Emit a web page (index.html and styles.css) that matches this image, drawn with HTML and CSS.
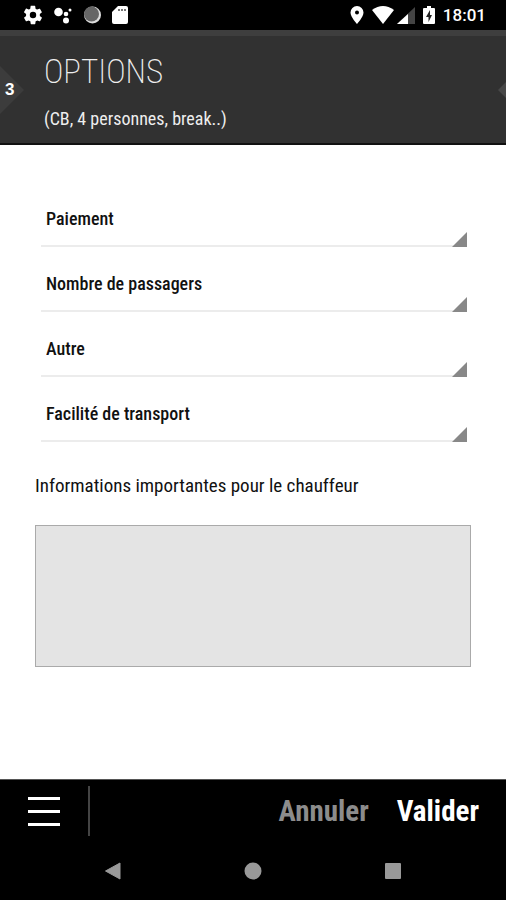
FILE: index.html
```html
<!DOCTYPE html>
<html lang="fr">
<head>
<meta charset="utf-8">
<meta name="viewport" content="width=device-width, initial-scale=1">
<title>Options</title>
<link rel="stylesheet" href="styles.css">
</head>
<body>
<div class="status">
  <div class="status-left">
    <svg width="22" height="22" viewBox="0 0 24 24" fill="#fff"><path d="M19.4 13c0-.3.1-.6.1-1s0-.7-.1-1l2.100-1.600c.2-.2.3-.4.100-.6l-2-3.500c-.1-.2-.4-.3-.6-.2l-2.500 1c-.5-.4-1.100-.7-1.700-1l-.4-2.600c0-.3-.2-.5-.5-.5h-4c-.2 0-.4.200-.5.400l-.4 2.700c-.6.200-1.100.600-1.700.900l-2.500-1c-.2 0-.5 0-.6.300l-2 3.400c-.1.300 0 .500.200.700l2.100 1.600c0 .3-.1.600-.1 1s0 .700.100 1l-2.100 1.600c-.2.200-.3.400-.1.600l2 3.500c.1.200.4.300.6.200l2.500-1c.5.400 1.100.700 1.700 1l.4 2.600c0 .3.200.500.500.500h4c.3 0 .500-.2.500-.5l.4-2.600c.6-.2 1.200-.6 1.700-1l2.500 1c.2.100.5 0 .6-.2l2-3.500c.1-.2.100-.5-.1-.6zM12 15.500a3.500 3.500 0 1 1 0-7 3.500 3.500 0 0 1 0 7z"/></svg>
    <svg width="20" height="20" viewBox="0 0 20 20" fill="#fff"><circle cx="4.500" cy="7" r="4.300"/><circle cx="12" cy="9" r="2.300"/><circle cx="16" cy="5" r="1.500"/><circle cx="12" cy="15.500" r="3"/></svg>
    <svg width="18" height="20" viewBox="0 0 18 20"><circle cx="8.500" cy="10" r="8.500" fill="#ddd"/><circle cx="7.500" cy="9" r="7.500" fill="#666"/></svg>
    <svg width="16" height="20" viewBox="0 0 16 20"><path d="M6 1h8q2 0 2 2v14q0 2-2 2H2q-2 0-2-2V7z" fill="#fff"/><path d="M6 4h2v2H6zM9 4h2v2H9zM12 4h2v2h-2z" fill="#777"/></svg>
  </div>
  <div class="status-right">
    <svg width="14" height="20" viewBox="0 0 14 20"><path fill="#fff" fill-rule="evenodd" d="M7 1a6.500 6.500 0 0 0-6.500 6.500C.5 12 7 19 7 19s6.500-7 6.500-11.500A6.500 6.500 0 0 0 7 1zm0 4.500a2 2 0 1 1 0 4 2 2 0 0 1 0-4z"/></svg>
    <svg class="wifi" width="22" height="20" viewBox="0 0 22 20"><path fill="#fff" d="M0 5q11-8 22 0L11 19z"/></svg>
    <svg width="18" height="20" viewBox="0 0 18 20"><path fill="#444" d="M18 2v17H0z"/><path fill="#fff" d="M11 9v10H0z"/></svg>
    <svg class="battery" width="12" height="20" viewBox="0 0 12 20"><path fill="#fff" d="M4 1h4v2h3q1 0 1 1v14q0 1-1 1H1q-1 0-1-1V4q0-1 1-1h3z"/><path d="M7 5l-4 7h2.500v5L9 10H7z" fill="#222"/></svg>
    <span class="clock">18:01</span>
  </div>
</div>
<header class="header">
  <svg class="prev" width="24" height="48" viewBox="0 0 24 48"><path d="M0 0l24 24L0 48z" fill="#3c3c3c"/></svg>
  <span class="step">3</span>
  <svg class="next" width="8" height="16" viewBox="0 0 8 16"><path d="M8 0L0 8l8 8z" fill="#484848"/></svg>
  <h1 class="title">OPTIONS</h1>
  <p class="subtitle">(CB, 4 personnes, break..)</p>
</header>
<main class="content">
  <div class="fields">
    <div class="field"><select aria-label="Paiement"><option>Paiement</option></select></div>
    <div class="field"><select aria-label="Nombre de passagers"><option>Nombre de passagers</option></select></div>
    <div class="field"><select aria-label="Autre"><option>Autre</option></select></div>
    <div class="field"><select aria-label="Facilité de transport"><option>Facilité de transport</option></select></div>
  </div>
  <label class="info-label" for="info">Informations importantes pour le chauffeur</label>
  <textarea class="info" id="info"></textarea>
</main>
<footer>
  <div class="actions">
    <button class="menu" type="button" aria-label="Menu"><svg width="32" height="29" viewBox="0 0 32 29" fill="#fff"><path d="M0 0h32v3H0zM0 13h32v3H0zM0 26h32v3H0z"/></svg></button>
    <button class="cancel" type="button">Annuler</button>
    <button class="submit" type="button">Valider</button>
  </div>
  <nav class="system">
    <button type="button" aria-label="Retour"><svg width="18" height="18" viewBox="0 0 18 18"><path d="M1.500 9L16 1v16z" fill="#999" stroke="#999" stroke-linejoin="round"/></svg></button>
    <button type="button" aria-label="Accueil"><svg width="18" height="18" viewBox="0 0 18 18"><circle cx="9" cy="9" r="8.500" fill="#999"/></svg></button>
    <button type="button" aria-label="Applications"><svg width="18" height="18" viewBox="0 0 18 18"><rect x="1" y="1" width="16" height="16" rx="1" fill="#999"/></svg></button>
  </nav>
</footer>
</body>
</html>
```
FILE: styles.css
```css
* { box-sizing: border-box; }
body {
  margin: 0;
  min-height: 100vh;
  display: flex;
  flex-direction: column;
  background: #fff;
  color: #111;
  font-family: "Liberation Sans Narrow", "Roboto Condensed", "Open Sans Condensed", "Liberation Sans", sans-serif;
  font-size: 18px;
}
svg { display: block; flex: none; }
button { padding: 0; border: 0; background: none; font: inherit; color: inherit; }
.status {
  height: 30px;
  padding: 0 20px 0 22px;
  display: flex;
  align-items: center;
  justify-content: space-between;
  background: #000;
  color: #fff;
}
.status-left, .status-right { display: flex; align-items: center; }
.status-left { gap: 10px; }
.wifi { margin: 0 3px 0 8px; }
.battery { margin: 0 8px; }
.clock { font: 500 17px/20px Roboto, sans-serif; }
.header {
  position: relative;
  height: 115px;
  padding: 16px 44px 0;
  background: #313131;
  border-top: 6px solid #3e3e3e;
  border-bottom: 2px solid #111;
  color: #eee;
}
.prev { position: absolute; left: 0; top: 30px; }
.next { position: absolute; right: 0; top: 46px; }
.step {
  position: absolute;
  left: 5px;
  top: 44px;
  font: 700 17px/20px "Liberation Sans", sans-serif;
  color: #fff;
}
.title { margin: 0; font-size: 33px; line-height: 40px; font-weight: 200; }
.subtitle { margin: 15px 0 0; line-height: 24px; }
.content { flex: 1; padding: 41px 35px 0; display: flex; flex-direction: column; }
.fields { padding: 0 4px 0 6px; }
.field {
  position: relative;
  height: 65px;
  padding-top: 15px;
}
.field::after {
  content: "";
  position: absolute;
  right: 0;
  bottom: 4px;
  width: 15px;
  height: 15px;
  background: #888;
  clip-path: polygon(100% 0, 100% 100%, 0 100%);
  pointer-events: none;
}
select {
  appearance: none;
  width: 100%;
  height: 46px;
  padding: 0 5px 10px;
  border: 0;
  border-bottom: 2px solid #ececec;
  border-radius: 0;
  background: none;
  color: #111;
  font: inherit;
  font-weight: 500;
}
.info-label { margin-top: 28px; font-size: 19px; line-height: 24px; }
.info {
  height: 142px;
  margin-top: 27px;
  border: 1px solid #aaa;
  border-radius: 0;
  background: #e4e4e4;
  resize: none;
  font: inherit;
}
.actions {
  height: 63px;
  padding: 0 27px 0 28px;
  display: flex;
  align-items: center;
  gap: 28px;
  border-top: 1px solid #555;
  background: #000;
  color: #fff;
  font-size: 29px;
  font-weight: 700;
}
.menu { height: 50px; padding-right: 28px; border-right: 2px solid #444; }
.cancel { margin-left: auto; color: #8c8c8c; }
.system {
  height: 58px;
  padding: 0 104px;
  display: flex;
  align-items: center;
  justify-content: space-between;
  background: #000;
}
```
